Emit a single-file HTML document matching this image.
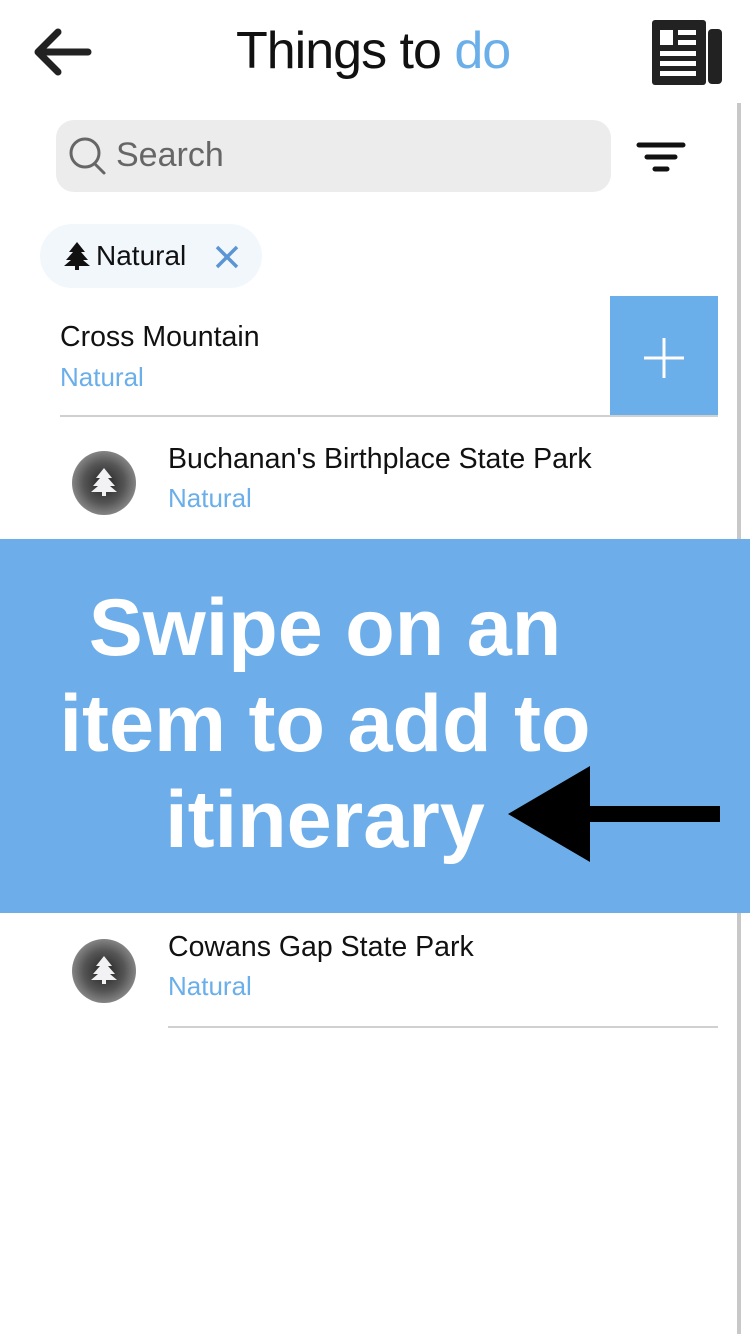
<!DOCTYPE html>
<html><head><style>
*{margin:0;padding:0;box-sizing:border-box}
body{width:750px;height:1334px;background:#fff;position:relative;overflow:hidden;font-family:"Liberation Sans",sans-serif}
.a{position:absolute}
.t{font-size:28.5px;color:#111}
.s{font-size:26px;color:#6aaeea}
.ic{width:64px;height:64px;border-radius:50%;background:radial-gradient(circle,#222 0%,#555 45%,#bbb 100%)}
</style></head><body>
<svg class="a" style="left:30px;top:24px" width="64" height="60" viewBox="0 0 64 60"><path d="M58 28H10M28 8L8 28l20 20" fill="none" stroke="#222" stroke-width="7" stroke-linecap="round" stroke-linejoin="round"/></svg>
<div class="a" style="left:236px;top:21px;font-size:52px;letter-spacing:-1px;color:#111">Things to <span style="color:#6aaeea">do</span></div>
<svg class="a" style="left:652px;top:20px" width="72" height="66" viewBox="0 0 72 66"><rect x="0" y="0" width="54" height="65" rx="3" fill="#222"/><rect x="56" y="9" width="14" height="55" rx="4" fill="#222"/><rect x="8" y="10" width="13" height="15" fill="#fff"/><rect x="26" y="10" width="18" height="5" fill="#fff"/><rect x="26" y="20" width="18" height="5" fill="#fff"/><rect x="8" y="31" width="36" height="5" fill="#fff"/><rect x="8" y="41" width="36" height="5" fill="#fff"/><rect x="8" y="51" width="36" height="5" fill="#fff"/></svg>
<div class="a" style="left:737px;top:103px;width:4px;height:1231px;background:#c8c8c8"></div>
<div class="a" style="left:56px;top:120px;width:555px;height:72px;border-radius:18px;background:#ececec"></div>
<svg class="a" style="left:68px;top:136px" width="40" height="40" viewBox="0 0 40 40"><circle cx="17" cy="17" r="14" fill="none" stroke="#666" stroke-width="3"/><path d="M27 28l9 9" stroke="#666" stroke-width="3" stroke-linecap="round"/></svg>
<div class="a" style="left:116px;top:136px;font-size:34px;color:#666">Search</div>
<svg class="a" style="left:636px;top:140px" width="50" height="34"><g stroke="#111" stroke-width="5" stroke-linecap="round"><path d="M3 5h44M11 17h28M19 29h12"/></g></svg>
<div class="a" style="left:40px;top:224px;width:222px;height:64px;border-radius:32px;background:#f2f7fc"></div>
<svg class="a" style="left:64px;top:242px" width="26" height="28" viewBox="0 0 26 28"><path d="M13 0L5 10h4L2 18h5L0 24h11v4h4v-4h11l-7-6h5l-7-8h4z" fill="#111"/></svg>
<div class="a" style="left:96px;top:240px;font-size:28px;color:#111">Natural</div>
<svg class="a" style="left:214px;top:244px" width="26" height="26"><path d="M3 3l20 20M23 3L3 23" stroke="#5b95d4" stroke-width="3.5"/></svg>
<div class="a t" style="left:60px;top:321px">Cross Mountain</div>
<div class="a s" style="left:60px;top:362px">Natural</div>
<div class="a" style="left:610px;top:296px;width:108px;height:120px;background:#6aaeea"></div>
<svg class="a" style="left:642px;top:336px" width="44" height="44"><path d="M22 2v40M2 22h40" stroke="#fff" stroke-width="3"/></svg>
<div class="a" style="left:60px;top:415px;width:658px;height:2px;background:#d0d0d0"></div>
<div class="a ic" style="left:72px;top:451px"></div>
<svg class="a" style="left:91px;top:468px" width="26" height="28" viewBox="0 0 26 28"><path d="M13 0L5 10h4L2 18h5L0 24h11v4h4v-4h11l-7-6h5l-7-8h4z" fill="#f2f2f5"/></svg>
<div class="a t" style="left:168px;top:443px">Buchanan's Birthplace State Park</div>
<div class="a s" style="left:168px;top:483px">Natural</div>
<div class="a" style="left:0;top:539px;width:750px;height:374px;background:#6daeea"></div>
<div class="a" style="left:0px;top:580px;width:650px;text-align:center;color:#fff;font-weight:bold;font-size:81px;line-height:96px">Swipe on an<br>item to add to<br>itinerary</div>
<svg class="a" style="left:508px;top:766px" width="214" height="96"><path d="M0 48L82 0v40h130v16H82v40z" fill="#000"/></svg>
<div class="a ic" style="left:72px;top:939px"></div>
<svg class="a" style="left:91px;top:956px" width="26" height="28" viewBox="0 0 26 28"><path d="M13 0L5 10h4L2 18h5L0 24h11v4h4v-4h11l-7-6h5l-7-8h4z" fill="#f2f2f5"/></svg>
<div class="a t" style="left:168px;top:931px">Cowans Gap State Park</div>
<div class="a s" style="left:168px;top:971px">Natural</div>
<div class="a" style="left:168px;top:1026px;width:550px;height:2px;background:#d0d0d0"></div>
</body></html>
